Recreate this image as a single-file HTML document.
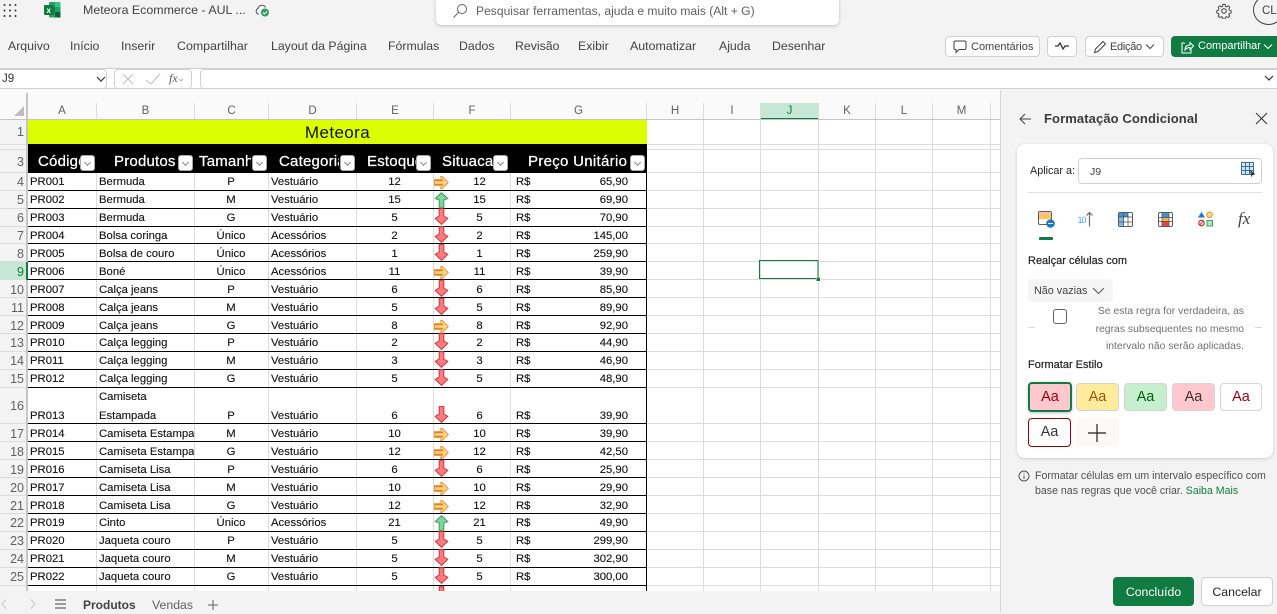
<!DOCTYPE html>
<html lang="pt"><head><meta charset="utf-8"><title>Meteora Ecommerce</title>
<style>
*{box-sizing:border-box}
html,body{margin:0;padding:0;width:1277px;height:612px;overflow:hidden;background:#f3f3f3;font-family:"Liberation Sans",sans-serif;color:#242424}
.t{position:absolute;white-space:nowrap}
.rb{top:38px;font-size:12.3px;line-height:17px;color:#424242}
#sheet{position:absolute;left:0;top:90px;width:1000px;height:501px;overflow:hidden;background:#fff}
#s2{position:absolute;left:0;top:-90px;width:1000px;height:612px}
.ch{position:absolute;top:103px;height:16px;line-height:17px;text-align:center;font-size:11.5px;color:#616161}
.rh{position:absolute;left:0;width:24px;height:16px;line-height:16px;text-align:right;font-size:12.5px;color:#616161}
.hd{position:absolute;top:152px;height:20px;line-height:20px;font-size:15px;letter-spacing:.2px;color:#fff;white-space:nowrap;overflow:hidden;-webkit-text-stroke:.25px #fff}
.fb{position:absolute;top:155px;width:15px;height:16px;background:#fff;border:1px solid #aaa;border-radius:3px}
.fb:after{content:"";position:absolute;left:4px;top:4px;width:4px;height:4px;border-right:1px solid #888;border-bottom:1px solid #888;transform:rotate(45deg)}
.r{position:absolute;left:0;width:647px;height:17px;line-height:17px;font-size:11.3px;color:#111}
.r i{position:absolute;font-style:normal;white-space:nowrap;top:1px;-webkit-text-stroke:.12px #111}
.r svg{position:absolute;left:434px;width:15px}
.a{left:30px}.b{left:99px;width:95px;overflow:hidden}.c{left:194px;width:74px;text-align:center}.d{left:271px}.e{left:356px;width:77px;text-align:center}.f{left:449px;width:61px;text-align:center}.g{left:516px}.h{right:19px}
.dn{top:-1px;height:17px}.rt{top:3px;height:13px}.up{top:1px;height:16px}
.btn{position:absolute;top:36px;height:21px;background:#fff;border:1px solid #d1d1d1;border-radius:4px;font-size:11px;line-height:20px;color:#424242}
.p{position:absolute;left:1000px;top:90px;width:277px;height:522px;background:#f3f3f3;border-left:1px solid #d6d6d6}
.st{position:absolute;height:29px;border-radius:4px;text-align:center;line-height:27px;font-size:14.5px;border:1px solid #d4d4d4}
</style></head><body>
<svg class="t" style="left:0;top:0;width:0;height:0"><defs>
<symbol id="d" viewBox="0 0 15 17"><path d="M5.2.6H9.8V8L13.8 10.4 7.5 16.4 1.2 10.4 5.2 8Z" fill="#ff7c80" stroke="#d13438"/></symbol>
<symbol id="o" viewBox="0 0 15 13"><path d="M.5 3.6H7.5L6.500 .6 8.500 .6 14.300 6.500 8.500 12.400 6.500 12.400 7.500 9.400H.5Z" fill="#ffd08a" stroke="#ee9a3a"/><path d="M.5 4.500H9M.5 8.500H9" stroke="#ed7d10" stroke-width="1.300"/></symbol>
<symbol id="u" viewBox="0 0 15 16"><path d="M5.2 15.4V8L1.2 6.6 7.5.7 13.8 6.6 9.8 8V15.4Z" fill="#82d39a" stroke="#3f9f5f"/></symbol>
</defs></svg>

<!-- top bar -->
<svg class="t" style="left:3px;top:3px" width="15" height="15" fill="#333"><circle cx="1.5" cy="2" r="1"/><circle cx="7" cy="2" r="1"/><circle cx="12.5" cy="2" r="1"/><circle cx="1.5" cy="7.5" r="1"/><circle cx="7" cy="7.5" r="1"/><circle cx="12.5" cy="7.5" r="1"/><circle cx="1.5" cy="13" r="1"/><circle cx="7" cy="13" r="1"/><circle cx="12.5" cy="13" r="1"/></svg>
<svg class="t" style="left:44px;top:1px" width="17" height="17"><rect x="5" y="1" width="11.5" height="15.5" rx="1" fill="#21a366"/><rect x="11" y="1" width="5.5" height="5" fill="#33c481"/><rect x="5" y="6" width="6" height="5" fill="#107c41"/><rect x="11" y="11" width="5.5" height="5.500" fill="#185c37"/><rect x="0" y="4" width="10" height="10" rx="1" fill="#107c41"/><text x="2.500" y="12" font-size="8" font-weight="bold" fill="#fff" font-family="Liberation Sans">x</text></svg>
<div class="t" style="left:83px;top:2px;font-size:12.4px;line-height:17px;color:#424242">Meteora Ecommerce - AUL ...</div>
<svg class="t" style="left:254px;top:3px" width="17" height="15"><path d="M5 11H4A3 3 0 0 1 4 5.500 4 4 0 0 1 11.500 4.500" fill="none" stroke="#555"/><circle cx="11" cy="9.500" r="4" fill="#2e9e5b"/><path d="M9 9.500l1.500 1.500 2.500-2.500" stroke="#fff" fill="none"/></svg>
<div class="t" style="left:436px;top:-4px;width:403px;height:29px;background:#fff;border-radius:5px;box-shadow:0 1px 3px rgba(0,0,0,.22)"></div>
<svg class="t" style="left:452px;top:3px" width="16" height="16" fill="none" stroke="#616161"><circle cx="10" cy="6" r="4.500"/><path d="M6.700 9.300L1.500 14.500"/></svg>
<div class="t" style="left:476px;top:3px;font-size:12.1px;line-height:16px;color:#616161">Pesquisar ferramentas, ajuda e muito mais (Alt + G)</div>
<svg class="t" style="left:1216px;top:3px" width="16" height="16" fill="none" stroke="#424242"><circle cx="8" cy="8" r="2.300"/><path d="M6.800 1h2.400l.4 2 1.300.6 1.800-1 1.600 1.700-1.100 1.700.5 1.300 2 .5v2.400l-2 .4-.5 1.300 1 1.700-1.600 1.600-1.700-1-1.300.5-.4 2H6.800l-.4-2-1.300-.5-1.700 1-1.700-1.600 1-1.700-.5-1.300-2-.4V7.800l2-.5.5-1.300-1-1.700 1.700-1.700 1.700 1 1.300-.6Z" transform="scale(.93) translate(.6 .5)"/></svg>
<div class="t" style="left:1253px;top:-5px;width:31px;height:30px;border:1px solid #424242;border-radius:50%;background:#f3f3f3;font-size:11.500px;line-height:30px;text-indent:8px;color:#424242">CL</div>

<div class="t rb" style="left:8px">Arquivo</div>
<div class="t rb" style="left:70px">Início</div>
<div class="t rb" style="left:121px">Inserir</div>
<div class="t rb" style="left:177px;font-size:12.4px">Compartilhar</div>
<div class="t rb" style="left:271px">Layout da Página</div>
<div class="t rb" style="left:388px">Fórmulas</div>
<div class="t rb" style="left:459px">Dados</div>
<div class="t rb" style="left:515px">Revisão</div>
<div class="t rb" style="left:578px">Exibir</div>
<div class="t rb" style="left:630px;font-size:12.400px">Automatizar</div>
<div class="t rb" style="left:719px">Ajuda</div>
<div class="t rb" style="left:772px">Desenhar</div>

<div class="btn" style="left:945px;width:95px;padding-left:25px">Comentários</div>
<svg class="t" style="left:953px;top:40px" width="14" height="14" fill="none" stroke="#424242"><path d="M2.500 1H11.500A1.500 1.500 0 0 1 13 2.500V8A1.500 1.500 0 0 1 11.500 9.500H6L3 12.500V9.500H2.500A1.500 1.500 0 0 1 1 8V2.500A1.500 1.500 0 0 1 2.500 1Z"/></svg>
<div class="btn" style="left:1047px;width:30px"></div>
<svg class="t" style="left:1055px;top:42px" width="14" height="9" fill="none" stroke="#333"><path d="M0 4H3L5 1 8 7 10 4H14" stroke-width="1.300"/></svg>
<div class="btn" style="left:1085px;width:79px;padding-left:24px;letter-spacing:-.3px">Edição</div>
<svg class="t" style="left:1093px;top:40px" width="14" height="14" fill="none" stroke="#424242"><path d="M1.500 12.500L2.500 9 10 1.500 12.500 4 5 11.500Z"/></svg>
<svg class="t" style="left:1145px;top:43px" width="10" height="7" fill="none" stroke="#424242"><path d="M1 1.500L5 5.500 9 1.500"/></svg>
<div class="t" style="left:1171px;top:36px;width:110px;height:21px;background:#107c41;border-radius:4px;color:#fff;font-size:11px;line-height:21px;padding-left:27px">Compartilhar</div>
<svg class="t" style="left:1180px;top:40px" width="14" height="14" fill="none" stroke="#fff"><path d="M5 3H2V13H11V9M5 10C5 6.500 7 5 10 5V2.500L13.500 6 10 9.500V7.500C8 7.500 6.500 8 5 10Z"/></svg>
<svg class="t" style="left:1263px;top:43px" width="10" height="7" fill="none" stroke="#fff"><path d="M1 1.500L5 5.500 9 1.500"/></svg>

<!-- formula bar -->
<div class="t" style="left:0;top:68px;width:1277px;height:21px;background:#fff;border-top:1px solid #d1d1d1;border-bottom:1px solid #d1d1d1"></div>
<div class="t" style="left:-5px;top:69px;width:112px;height:20px;background:#fff;border:1px solid #d1d1d1;border-radius:4px;font-size:11.500px;line-height:19px;padding-left:6px;color:#333">J9</div>
<svg class="t" style="left:96px;top:76px" width="10" height="7" fill="none" stroke="#333"><path d="M1 1L5 5 9 1" stroke-width="1.200"/></svg>
<div class="t" style="left:114px;top:69px;width:78px;height:20px;background:#fff;border:1px solid #d1d1d1;border-radius:4px"></div>
<svg class="t" style="left:122px;top:73px" width="62" height="12" fill="none" stroke="#bdbdbd"><path d="M1 1L11 11M11 1L1 11M24 7L29 11 38 1"/><path d="M57 6l2 2 2-2" stroke="#bbb"/></svg>
<div class="t" style="left:169px;top:70px;font-size:12px;line-height:17px;font-style:italic;font-family:'Liberation Serif',serif;color:#555">fx</div>
<div class="t" style="left:200px;top:69px;width:1090px;height:20px;background:#fff;border:1px solid #d1d1d1;border-radius:4px"></div>
<svg class="t" style="left:1264px;top:75px" width="10" height="7" fill="none" stroke="#333"><path d="M1 1L5 5 9 1" stroke-width="1.200"/></svg>

<!-- sheet -->
<div id="sheet"><div id="s2">
<svg class="t" style="left:0;top:0" width="1000" height="612" shape-rendering="crispEdges">
<rect x="0" y="90" width="1000" height="30" fill="#fafafa"/>
<rect x="0" y="120" width="28" height="492" fill="#f3f3f3"/>
<rect x="760" y="103" width="58" height="16" fill="#c6e7d4"/>
<rect x="760" y="118" width="58" height="2" fill="#107c41"/>
<rect x="0" y="262" width="27" height="18" fill="#c6e7d4"/>
<g stroke="#dcdcdc" stroke-width="1">
<path d="M0 144.500H1000M0 149.500H1000M0 172.500H1000M0 190.500H1000M0 208.500H1000M0 226.500H1000M0 243.500H1000M0 261.500H1000M0 279.500H1000M0 297.500H1000M0 315.500H1000M0 333.500H1000M0 351.500H1000M0 369.500H1000M0 387.500H1000M0 423.500H1000M0 441.500H1000M0 459.500H1000M0 477.500H1000M0 495.500H1000M0 513.500H1000M0 531.500H1000M0 549.500H1000M0 567.500H1000M0 585.500H1000"/>
<path d="M96.500 103V612M194.500 103V612M268.500 103V612M356.500 103V612M433.500 103V612M510.500 103V612M646.500 103V612M703.500 103V612M760.500 103V612M818.500 103V612M875.500 103V612M932.500 103V612M990.500 103V612"/>
</g>
<rect x="28" y="119" width="972" height="1" fill="#c4c4c4"/>
<rect x="0" y="119" width="28" height="1" fill="#c4c4c4"/>
<rect x="26" y="93" width="2" height="520" fill="#c6c6c6"/>
<rect x="26" y="262" width="2" height="18" fill="#107c41"/>
<rect x="28" y="120" width="619" height="24" fill="#dcff00"/>
<rect x="28" y="144" width="619" height="29" fill="#000"/>
<g fill="#000">
<rect x="28" y="190" width="619" height="1"/><rect x="28" y="208" width="619" height="1"/><rect x="28" y="226" width="619" height="1"/><rect x="28" y="243" width="619" height="1"/><rect x="28" y="261" width="619" height="1"/><rect x="28" y="279" width="619" height="1"/><rect x="28" y="297" width="619" height="1"/><rect x="28" y="315" width="619" height="1"/><rect x="28" y="333" width="619" height="1"/><rect x="28" y="351" width="619" height="1"/><rect x="28" y="369" width="619" height="1"/><rect x="28" y="387" width="619" height="1"/><rect x="28" y="423" width="619" height="1"/><rect x="28" y="441" width="619" height="1"/><rect x="28" y="459" width="619" height="1"/><rect x="28" y="477" width="619" height="1"/><rect x="28" y="495" width="619" height="1"/><rect x="28" y="513" width="619" height="1"/><rect x="28" y="531" width="619" height="1"/><rect x="28" y="549" width="619" height="1"/><rect x="28" y="567" width="619" height="1"/><rect x="28" y="585" width="619" height="1"/>
<rect x="646" y="144" width="1" height="470"/>
</g>
<path d="M24 106V116H14Z" fill="#bdbdbd" shape-rendering="auto"/>
<rect x="759.500" y="260.500" width="58.500" height="18" fill="none" stroke="#107c41" stroke-width="1"/>
<rect x="816" y="277" width="4" height="4" fill="#107c41" stroke="#fff" stroke-width=".5"/>
</svg>

<div class="ch" style="left:28px;width:68px">A</div><div class="ch" style="left:97px;width:97px">B</div><div class="ch" style="left:195px;width:73px">C</div><div class="ch" style="left:269px;width:87px">D</div><div class="ch" style="left:357px;width:76px">E</div><div class="ch" style="left:434px;width:76px">F</div><div class="ch" style="left:511px;width:135px">G</div><div class="ch" style="left:647px;width:56px">H</div><div class="ch" style="left:704px;width:56px">I</div><div class="ch" style="left:761px;width:57px;color:#107c41">J</div><div class="ch" style="left:819px;width:56px">K</div><div class="ch" style="left:876px;width:56px">L</div><div class="ch" style="left:933px;width:57px">M</div>

<div class="rh" style="top:124px">1</div><div class="rh" style="top:154px">3</div><div class="rh" style="top:174px">4</div><div class="rh" style="top:192px">5</div><div class="rh" style="top:210px">6</div><div class="rh" style="top:228px">7</div><div class="rh" style="top:246px">8</div><div class="rh" style="top:264px;color:#107c41">9</div><div class="rh" style="top:282px">10</div><div class="rh" style="top:300px">11</div><div class="rh" style="top:318px">12</div><div class="rh" style="top:335px">13</div><div class="rh" style="top:353px">14</div><div class="rh" style="top:371px">15</div><div class="rh" style="top:398px">16</div><div class="rh" style="top:426px">17</div><div class="rh" style="top:444px">18</div><div class="rh" style="top:462px">19</div><div class="rh" style="top:480px">20</div><div class="rh" style="top:498px">21</div><div class="rh" style="top:515px">22</div><div class="rh" style="top:533px">23</div><div class="rh" style="top:551px">24</div><div class="rh" style="top:569px">25</div>

<div class="t" style="left:28px;top:120px;width:619px;height:24px;line-height:25px;text-align:center;font-size:17px;letter-spacing:.4px;color:#111">Meteora</div>

<div class="hd" style="left:38px;width:42px">Código</div><div class="fb" style="left:80px"></div>
<div class="hd" style="left:114px;width:64px">Produtos</div><div class="fb" style="left:178px"></div>
<div class="hd" style="left:199px;width:52px">Tamanho</div><div class="fb" style="left:252px"></div>
<div class="hd" style="left:279px;width:60px">Categoria</div><div class="fb" style="left:340px"></div>
<div class="hd" style="left:367px;width:49px">Estoque</div><div class="fb" style="left:416px"></div>
<div class="hd" style="left:442px;width:51px">Situacao</div><div class="fb" style="left:493px"></div>
<div class="hd" style="left:528px;width:102px;letter-spacing:.3px">Preço Unitário</div><div class="fb" style="left:630px"></div>

<div class="r" style="top:173px"><i class="a">PR001</i><i class="b">Bermuda</i><i class="c">P</i><i class="d">Vestuário</i><i class="e">12</i><svg class="rt"><use href="#o"/></svg><i class="f">12</i><i class="g">R$</i><i class="h">65,90</i></div>
<div class="r" style="top:191px"><i class="a">PR002</i><i class="b">Bermuda</i><i class="c">M</i><i class="d">Vestuário</i><i class="e">15</i><svg class="up"><use href="#u"/></svg><i class="f">15</i><i class="g">R$</i><i class="h">69,90</i></div>
<div class="r" style="top:209px"><i class="a">PR003</i><i class="b">Bermuda</i><i class="c">G</i><i class="d">Vestuário</i><i class="e">5</i><svg class="dn"><use href="#d"/></svg><i class="f">5</i><i class="g">R$</i><i class="h">70,90</i></div>
<div class="r" style="top:227px"><i class="a">PR004</i><i class="b">Bolsa coringa</i><i class="c">Único</i><i class="d">Acessórios</i><i class="e">2</i><svg class="dn"><use href="#d"/></svg><i class="f">2</i><i class="g">R$</i><i class="h">145,00</i></div>
<div class="r" style="top:245px"><i class="a">PR005</i><i class="b">Bolsa de couro</i><i class="c">Único</i><i class="d">Acessórios</i><i class="e">1</i><svg class="dn"><use href="#d"/></svg><i class="f">1</i><i class="g">R$</i><i class="h">259,90</i></div>
<div class="r" style="top:263px"><i class="a">PR006</i><i class="b">Boné</i><i class="c">Único</i><i class="d">Acessórios</i><i class="e">11</i><svg class="rt"><use href="#o"/></svg><i class="f">11</i><i class="g">R$</i><i class="h">39,90</i></div>
<div class="r" style="top:281px"><i class="a">PR007</i><i class="b">Calça jeans</i><i class="c">P</i><i class="d">Vestuário</i><i class="e">6</i><svg class="dn"><use href="#d"/></svg><i class="f">6</i><i class="g">R$</i><i class="h">85,90</i></div>
<div class="r" style="top:299px"><i class="a">PR008</i><i class="b">Calça jeans</i><i class="c">M</i><i class="d">Vestuário</i><i class="e">5</i><svg class="dn"><use href="#d"/></svg><i class="f">5</i><i class="g">R$</i><i class="h">89,90</i></div>
<div class="r" style="top:317px"><i class="a">PR009</i><i class="b">Calça jeans</i><i class="c">G</i><i class="d">Vestuário</i><i class="e">8</i><svg class="rt"><use href="#o"/></svg><i class="f">8</i><i class="g">R$</i><i class="h">92,90</i></div>
<div class="r" style="top:334px"><i class="a">PR010</i><i class="b">Calça legging</i><i class="c">P</i><i class="d">Vestuário</i><i class="e">2</i><svg class="dn"><use href="#d"/></svg><i class="f">2</i><i class="g">R$</i><i class="h">44,90</i></div>
<div class="r" style="top:352px"><i class="a">PR011</i><i class="b">Calça legging</i><i class="c">M</i><i class="d">Vestuário</i><i class="e">3</i><svg class="dn"><use href="#d"/></svg><i class="f">3</i><i class="g">R$</i><i class="h">46,90</i></div>
<div class="r" style="top:370px"><i class="a">PR012</i><i class="b">Calça legging</i><i class="c">G</i><i class="d">Vestuário</i><i class="e">5</i><svg class="dn"><use href="#d"/></svg><i class="f">5</i><i class="g">R$</i><i class="h">48,90</i></div>
<div class="r" style="top:407px"><i class="a">PR013</i><i class="b" style="top:-18px">Camiseta</i><i class="b">Estampada</i><i class="c">P</i><i class="d">Vestuário</i><i class="e">6</i><svg class="dn"><use href="#d"/></svg><i class="f">6</i><i class="g">R$</i><i class="h">39,90</i></div>
<div class="r" style="top:425px"><i class="a">PR014</i><i class="b">Camiseta Estampada</i><i class="c">M</i><i class="d">Vestuário</i><i class="e">10</i><svg class="rt"><use href="#o"/></svg><i class="f">10</i><i class="g">R$</i><i class="h">39,90</i></div>
<div class="r" style="top:443px"><i class="a">PR015</i><i class="b">Camiseta Estampada</i><i class="c">G</i><i class="d">Vestuário</i><i class="e">12</i><svg class="rt"><use href="#o"/></svg><i class="f">12</i><i class="g">R$</i><i class="h">42,50</i></div>
<div class="r" style="top:461px"><i class="a">PR016</i><i class="b">Camiseta Lisa</i><i class="c">P</i><i class="d">Vestuário</i><i class="e">6</i><svg class="dn"><use href="#d"/></svg><i class="f">6</i><i class="g">R$</i><i class="h">25,90</i></div>
<div class="r" style="top:479px"><i class="a">PR017</i><i class="b">Camiseta Lisa</i><i class="c">M</i><i class="d">Vestuário</i><i class="e">10</i><svg class="rt"><use href="#o"/></svg><i class="f">10</i><i class="g">R$</i><i class="h">29,90</i></div>
<div class="r" style="top:497px"><i class="a">PR018</i><i class="b">Camiseta Lisa</i><i class="c">G</i><i class="d">Vestuário</i><i class="e">12</i><svg class="rt"><use href="#o"/></svg><i class="f">12</i><i class="g">R$</i><i class="h">32,90</i></div>
<div class="r" style="top:514px"><i class="a">PR019</i><i class="b">Cinto</i><i class="c">Único</i><i class="d">Acessórios</i><i class="e">21</i><svg class="up"><use href="#u"/></svg><i class="f">21</i><i class="g">R$</i><i class="h">49,90</i></div>
<div class="r" style="top:532px"><i class="a">PR020</i><i class="b">Jaqueta couro</i><i class="c">P</i><i class="d">Vestuário</i><i class="e">5</i><svg class="dn"><use href="#d"/></svg><i class="f">5</i><i class="g">R$</i><i class="h">299,90</i></div>
<div class="r" style="top:550px"><i class="a">PR021</i><i class="b">Jaqueta couro</i><i class="c">M</i><i class="d">Vestuário</i><i class="e">5</i><svg class="dn"><use href="#d"/></svg><i class="f">5</i><i class="g">R$</i><i class="h">302,90</i></div>
<div class="r" style="top:568px"><i class="a">PR022</i><i class="b">Jaqueta couro</i><i class="c">G</i><i class="d">Vestuário</i><i class="e">5</i><svg class="dn"><use href="#d"/></svg><i class="f">5</i><i class="g">R$</i><i class="h">300,00</i></div>
<div class="r" style="top:587px"><i class="d">Vestuário</i><svg class="dn"><use href="#d"/></svg><i class="g">R$</i></div>
</div></div>

<!-- tabs -->
<div class="t" style="left:0;top:591px;width:1000px;height:21px;background:#f3f3f3"></div>
<svg class="t" style="left:0;top:598px" width="70" height="12" fill="none"><path d="M6 1.500L2 6 6 10.500M31 1.500L35 6 31 10.500" stroke="#c8c8c8"/><path d="M55 2H66M55 6H66M55 10H66" stroke="#424242"/></svg>
<div class="t" style="left:83px;top:596px;font-size:12px;line-height:18px;font-weight:bold;color:#424242">Produtos</div>
<div class="t" style="left:152px;top:596px;font-size:12.3px;line-height:18px;color:#616161">Vendas</div>
<svg class="t" style="left:207px;top:599px" width="12" height="12" stroke="#616161"><path d="M6 1V11M1 6H11"/></svg>

<!-- panel -->
<div class="p"></div>
<svg class="t" style="left:1019px;top:113px" width="13" height="12" fill="none" stroke="#424242"><path d="M12 6H1M6 1L1 6 6 11"/></svg>
<div class="t" style="left:1044px;top:110px;font-size:13px;line-height:17px;font-weight:bold;color:#3b3b3b;letter-spacing:.1px">Formatação Condicional</div>
<svg class="t" style="left:1255px;top:112px" width="13" height="13" fill="none" stroke="#333"><path d="M1 1L12 12M12 1L1 12"/></svg>

<div class="t" style="left:1017px;top:144px;width:256px;height:314px;background:#fff;border-radius:8px;box-shadow:0 1px 3px rgba(0,0,0,.16)"></div>
<div class="t" style="left:1030px;top:163px;font-size:10.800px;line-height:16px;color:#242424">Aplicar a:</div>
<div class="t" style="left:1078px;top:158px;width:184px;height:26px;border:1px solid #d1d1d1;border-radius:4px;font-size:10.500px;line-height:26px;padding-left:11px;color:#424242">J9</div>
<svg class="t" style="left:1241px;top:162px" width="15" height="16" fill="none"><rect x=".5" y=".5" width="12" height="12" fill="#cfe4f7" stroke="#3a6f9f"/><path d="M.5 4.500H12.500M.5 8.500H12.500M4.500 .5V12.500M8.500 .5V12.500" stroke="#3a6f9f"/><path d="M9 8L14.500 12.500 11.500 12.800 10.500 15.500Z" fill="#333"/></svg>
<div class="t" style="left:1028px;top:192px;width:234px;height:1px;background:#e0e0e0"></div>

<svg class="t" style="left:1038px;top:211px" width="17" height="17" fill="none"><rect x=".5" y=".5" width="13" height="13" rx="1.500" fill="#fff" stroke="#5c5c5c"/><rect x="1" y="1" width="12" height="2" fill="#f7c0b0"/><rect x="1" y="3" width="12" height="5" fill="#fdc65a"/><circle cx="12.500" cy="12.500" r="4.300" fill="#1b78c9"/><path d="M10 12.500h5" stroke="#fff"/></svg>
<svg class="t" style="left:1078px;top:211px" width="17" height="16" fill="none"><text x="-.5" y="12" font-size="9" fill="#4aa3e8" font-family="Liberation Sans" letter-spacing="-1">10</text><path d="M11.500 15.500V1.500M8.500 4.500L11.500 1.500 14.500 4.500" stroke="#6e6e6e" stroke-width="1.200"/></svg>
<svg class="t" style="left:1118px;top:212px" width="15" height="15" fill="none"><rect x=".5" y=".5" width="14" height="14" rx="1.500" fill="#fff" stroke="#5c5c5c"/><rect x="1" y="1" width="9" height="4" fill="#3c94dd"/><rect x="1" y="5" width="5" height="9" fill="#7dbbf0"/><path d="M1 5H14M1 10H14M5.500 1V14M10 1V14" stroke="#4a4a4a" stroke-width=".7"/></svg>
<svg class="t" style="left:1158px;top:212px" width="15" height="15" fill="none"><rect x=".5" y=".5" width="14" height="14" rx="1.500" fill="#fff" stroke="#5c5c5c"/><rect x="4" y="1" width="7" height="4.500" fill="#3c94dd"/><rect x="4" y="5.500" width="7" height="4" fill="#fbb040"/><rect x="4" y="9.500" width="7" height="4.500" fill="#e8424a"/><path d="M4 1V14M11 1V14M1 5.500H14M1 9.500H14" stroke="#4a4a4a" stroke-width=".7"/></svg>
<svg class="t" style="left:1197px;top:211px" width="17" height="16" fill="none"><path d="M4.500 1L8 6.500H1Z" fill="#1b78c9"/><circle cx="12.500" cy="3.800" r="2.800" fill="#fdd9a0" stroke="#e8931c"/><circle cx="4.500" cy="12" r="2.700" stroke="#d13438" stroke-width="1.300"/><path d="M2.700 13.800L6.300 10.200" stroke="#d13438"/><rect x="10" y="9.500" width="5.500" height="5.500" fill="#b8e6c4" stroke="#3f9f5f"/></svg>
<div class="t" style="left:1238px;top:209px;font-size:17px;line-height:19px;font-style:italic;font-family:'Liberation Serif',serif;color:#424242">fx</div>
<div class="t" style="left:1039px;top:237px;width:14px;height:3px;background:#107c41;border-radius:1px"></div>

<div class="t" style="left:1028px;top:253px;font-size:11px;line-height:16px;color:#242424;-webkit-text-stroke:.2px #242424">Realçar células com</div>
<div class="t" style="left:1028px;top:279px;width:85px;height:23px;background:#f5f5f5;border-radius:4px;font-size:10.800px;line-height:25px;padding-left:6px;color:#424242">Não vazias</div>
<svg class="t" style="left:1092px;top:287px" width="13" height="8" fill="none" stroke="#555"><path d="M1 1L6.500 6.500 12 1"/></svg>
<div class="t" style="left:1053px;top:309px;width:14px;height:15px;border:1px solid #616161;border-radius:3px;background:#fff"></div>
<div class="t" style="right:33px;top:303px;text-align:right;font-size:10.400px;line-height:17.600px;color:#707070">Se esta regra for verdadeira, as<br>regras subsequentes no mesmo<br>intervalo não serão aplicadas.</div>
<div class="t" style="left:1028px;top:327px;width:7px;height:1px;background:#d8d8d8"></div>
<div class="t" style="left:1255px;top:327px;width:7px;height:1px;background:#d8d8d8"></div>
<div class="t" style="left:1028px;top:357px;font-size:11px;line-height:16px;color:#242424;-webkit-text-stroke:.2px #242424">Formatar Estilo</div>

<div class="st" style="left:1028px;top:382px;width:44px;height:30px;background:#ffc7ce;color:#9c0006;border:2px solid #107c41;box-shadow:0 1px 3px rgba(0,0,0,.25);line-height:27px">Aa</div>
<div class="st" style="left:1076px;top:383px;width:43px;height:28px;background:#ffeb9c;color:#9c5700">Aa</div>
<div class="st" style="left:1124px;top:383px;width:43px;height:28px;background:#c6efce;color:#006100">Aa</div>
<div class="st" style="left:1172px;top:383px;width:43px;height:28px;background:#ffc7ce;color:#333">Aa</div>
<div class="st" style="left:1220px;top:383px;width:42px;height:28px;background:#fff;color:#9c0006">Aa</div>
<div class="st" style="left:1028px;top:418px;width:43px;height:29px;background:#fff;color:#333;border:1px solid #9c0006">Aa</div>
<div class="t" style="left:1076px;top:418px;width:43px;height:29px;background:#faf9f8;border-radius:4px"></div>
<svg class="t" style="left:1088px;top:424px" width="18" height="18" stroke="#222"><path d="M9 0V18M0 9H18" stroke-width="1.200"/></svg>

<svg class="t" style="left:1018px;top:470px" width="12" height="12" fill="none" stroke="#555"><circle cx="6" cy="6" r="5"/><path d="M6 5.200V9M6 3V4"/></svg>
<div class="t" style="left:1035px;top:469px;font-size:10.600px;line-height:15px;color:#505050">Formatar células em um intervalo específico com<br>base nas regras que você criar. <span style="color:#107c41">Saiba Mais</span></div>

<div class="t" style="left:1113px;top:577px;width:81px;height:29px;background:#107c41;border-radius:4px;color:#fff;text-align:center;font-size:12.300px;line-height:30px">Concluído</div>
<div class="t" style="left:1201px;top:577px;width:72px;height:29px;background:#fff;border:1px solid #d1d1d1;border-radius:4px;color:#242424;text-align:center;font-size:12.300px;line-height:28px">Cancelar</div>
</body></html>
